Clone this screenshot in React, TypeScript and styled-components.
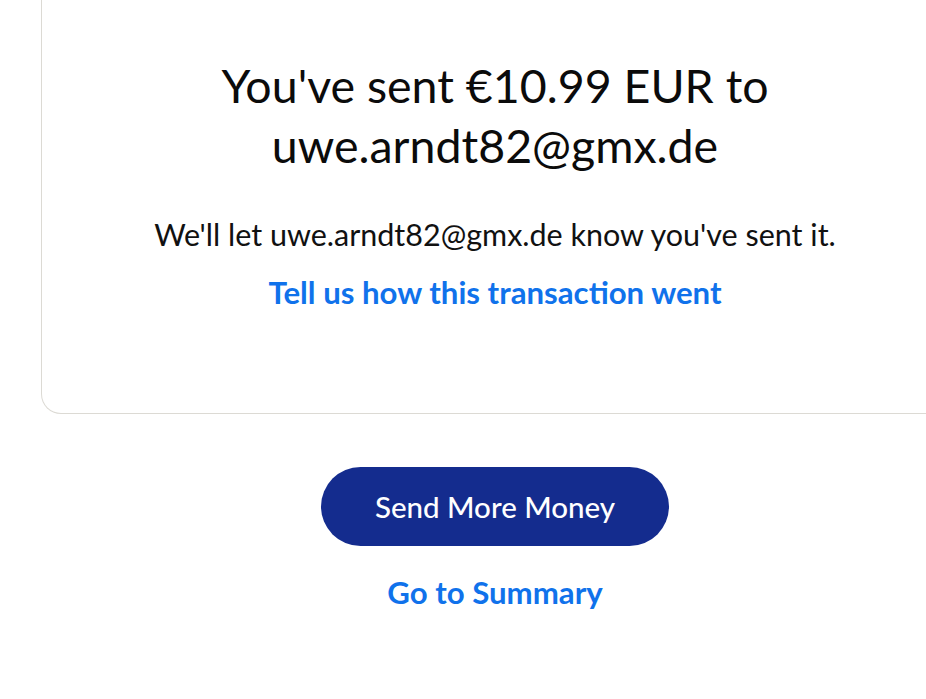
import React from "react";
import styled, { createGlobalStyle } from "styled-components";

const GlobalStyle = createGlobalStyle`
  html, body {
    margin: 0;
    padding: 0;
    background: #ffffff;
    overflow: hidden;
  }
  body {
    font-family: Lato, "Noto Sans", "Liberation Sans", sans-serif;
    color: #000000;
    -webkit-font-smoothing: antialiased;
  }
`;

const Page = styled.main`
  width: 926px;
  height: 699px;
  padding-left: 41px;
  box-sizing: border-box;
  overflow: hidden;
  display: flex;
  flex-direction: column;
  align-items: flex-start;
`;

const Column = styled.div`
  width: 908px;
  flex-shrink: 0;
  display: flex;
  flex-direction: column;
  align-items: center;
`;

const Card = styled.section`
  width: 100%;
  box-sizing: border-box;
  border: 1px solid #dcdad4;
  border-top: none;
  border-radius: 0 0 20px 20px;
  padding: 55px 40px 103px;
  display: flex;
  flex-direction: column;
  align-items: center;
  text-align: center;
`;

const Heading = styled.h1`
  margin: 0;
  font-size: 46.5px;
  line-height: 60px;
  font-weight: 400;
  color: #0b0b0b;
  max-width: 620px;
`;

const Message = styled.p`
  margin: 41px 0 0;
  font-size: 30.5px;
  line-height: 36px;
  color: #111111;
  white-space: nowrap;
`;

const TextLink = styled.a<{ $top: number }>`
  display: block;
  margin-top: ${(p) => p.$top}px;
  font-size: 31.2px;
  line-height: 36px;
  font-weight: 700;
  color: #1072eb;
  text-decoration: none;
  white-space: nowrap;
  cursor: pointer;
`;

const PrimaryButton = styled.button`
  margin-top: 53px;
  width: 348px;
  height: 79px;
  border: none;
  border-radius: 40px;
  background: #142c8e;
  color: #ffffff;
  font-family: inherit;
  font-size: 29.5px;
  font-weight: 500;
  cursor: pointer;
`;

export default function App() {
  return (
    <>
      <GlobalStyle />
      <Page>
        <Column>
          <Card>
            <Heading>You've sent €10.99 EUR to uwe.arndt82@gmx.de</Heading>
            <Message>We'll let uwe.arndt82@gmx.de know you've sent it.</Message>
            <TextLink $top={22}>Tell us how this transaction went</TextLink>
          </Card>
          <PrimaryButton>Send More Money</PrimaryButton>
          <TextLink $top={28}>Go to Summary</TextLink>
        </Column>
      </Page>
    </>
  );
}
